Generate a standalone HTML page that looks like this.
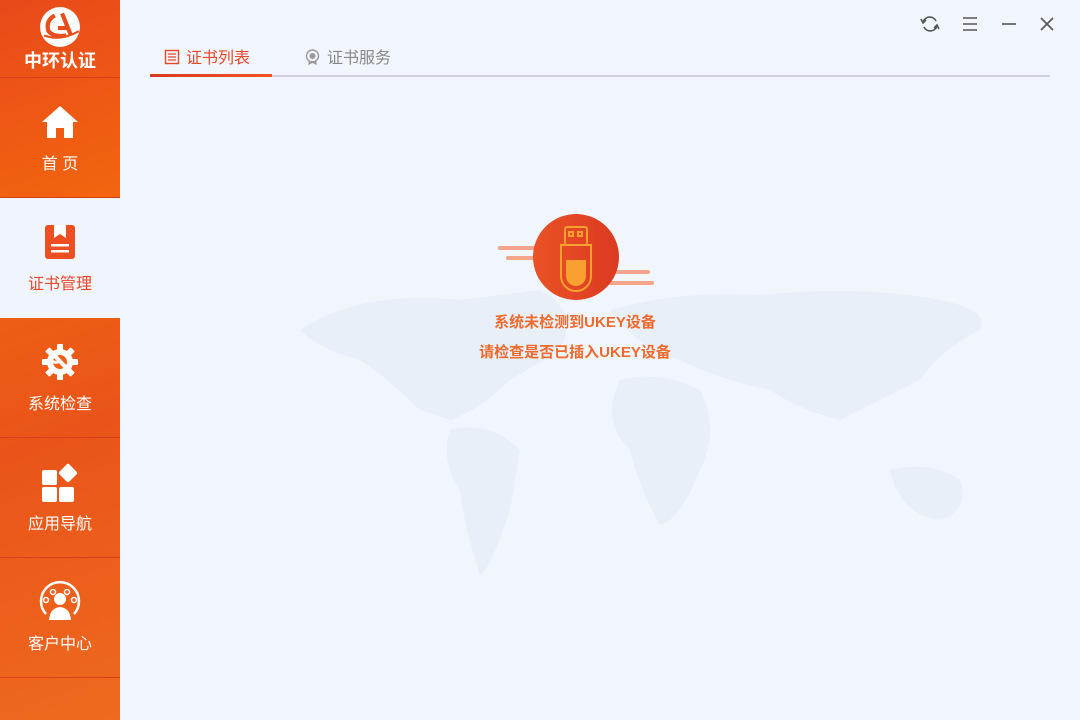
<!DOCTYPE html>
<html><head><meta charset="utf-8"><style>
*{margin:0;padding:0;box-sizing:border-box}
html,body{width:1080px;height:720px;overflow:hidden}
body{background:#f1f5fc;font-family:"Liberation Sans","Noto Sans CJK SC",sans-serif;position:relative}
.side{position:absolute;left:0;top:0;width:120px;height:720px;background:linear-gradient(160deg,#e9491b 0%,#f2640f 30%,#ea541a 60%,#ee6a1e 100%);overflow:hidden}
.item{position:absolute;left:0;width:120px;height:120px;color:#fff;font-size:16px;text-align:center;border-bottom:1px solid #d9401a}
.item svg{position:absolute;left:40px;top:24px}
.item span{position:absolute;left:0;right:0;top:72px}
.sel{background:#f0f4fb;color:#e8482a;border:none}
.logo{position:absolute;top:0;height:78px;width:120px;border-bottom:1px solid #d9401a;color:#fff;text-align:center}
.tabs{position:absolute;left:150px;top:38px;width:900px;height:39px;border-bottom:2px solid #cfd3d9}
.tab{position:absolute;top:6px;font-size:16px}
.ul{position:absolute;left:0;bottom:-2px;width:122px;height:3px;background:linear-gradient(90deg,#d83a22,#f4511e)}
.msg{position:absolute;left:375px;width:400px;text-align:center;font-size:15px;font-weight:bold;color:#ef6a2c}
</style></head><body>
<svg style="position:absolute;left:280px;top:270px" width="720" height="310" viewBox="0 0 720 310">
<g fill="#e6eef7" opacity="0.8">
<path d="M20 60 Q80 20 180 30 L260 20 Q300 40 280 80 L230 110 Q200 140 170 150 L140 140 Q110 110 80 90 Q40 80 20 60Z"/>
<path d="M170 160 Q210 150 240 180 L230 240 Q210 300 200 305 Q185 260 180 220 Q160 190 170 160Z"/>
<path d="M330 40 Q400 20 480 25 Q580 15 660 30 Q710 40 700 60 Q660 80 640 110 Q600 130 560 150 Q520 140 490 120 Q440 110 400 90 Q360 80 330 40Z"/>
<path d="M340 110 Q380 100 420 120 Q440 160 420 200 Q400 250 380 255 Q360 220 350 180 Q320 150 340 110Z"/>
<path d="M610 200 Q650 190 680 210 Q690 240 660 250 Q620 245 610 200Z"/>
</g></svg>
<div class="side">
<div class="logo">
<svg style="position:absolute;left:39px;top:6px" width="42" height="42" viewBox="0 0 40 40"><circle cx="20" cy="20" r="19" fill="#fff"/><path d="M15 9 Q6 14 9 24 Q14 30 26 28" stroke="#ea4d1c" stroke-width="4" fill="none"/><path d="M22 7 L30 27 M18 21 L28 21" stroke="#ea4d1c" stroke-width="4" fill="none"/><path d="M5 28 Q20 34 38 24" stroke="#ea4d1c" stroke-width="2" fill="none"/></svg>
<div style="position:absolute;top:47px;width:120px;font-size:18px;font-weight:bold">中环认证</div></div>
<div class="item" style="top:78px"><svg width="40" height="40" viewBox="0 0 40 40"><path d="M20 4 L38 20 L33 20 L33 36 L24 36 L24 26 L16 26 L16 36 L7 36 L7 20 L2 20Z" fill="#fff"/></svg><span>首 页</span></div>
<div class="item sel" style="top:198px"><svg width="40" height="40" viewBox="0 0 40 40"><rect x="5" y="3" width="30" height="34" rx="3" fill="#ee4f22"/><path d="M14 3 L14 16 L20 12 L26 16 L26 3" fill="#fff"/><rect x="11" y="22" width="18" height="2.5" fill="#fff"/><rect x="11" y="28" width="18" height="2.5" fill="#fff"/></svg><span>证书管理</span></div>
<div class="item" style="top:318px"><svg width="40" height="40" viewBox="0 0 40 40"><g fill="#fff"><circle cx="20" cy="20" r="13"/><g id="t"><rect x="17" y="2" width="6" height="7" rx="1"/></g><use href="#t" transform="rotate(45 20 20)"/><use href="#t" transform="rotate(90 20 20)"/><use href="#t" transform="rotate(135 20 20)"/><use href="#t" transform="rotate(180 20 20)"/><use href="#t" transform="rotate(225 20 20)"/><use href="#t" transform="rotate(270 20 20)"/><use href="#t" transform="rotate(315 20 20)"/></g><circle cx="20" cy="20" r="7" fill="#f06018"/><path d="M14 13 L30 30" stroke="#fff" stroke-width="4"/><path d="M10 14 A6 6 0 0 0 18 20" stroke="#fff" stroke-width="3" fill="none"/></svg><span>系统检查</span></div>
<div class="item" style="top:438px"><svg width="40" height="40" viewBox="0 0 40 40"><rect x="2" y="8" width="15" height="15" rx="2" fill="#fff"/><rect x="2" y="25" width="15" height="15" rx="2" fill="#fff"/><rect x="19" y="25" width="15" height="15" rx="2" fill="#fff"/><rect x="21" y="4" width="14" height="14" rx="2" fill="#fff" transform="rotate(45 28 11)"/></svg><span>应用导航</span></div>
<div class="item" style="top:558px"><svg width="44" height="44" viewBox="0 0 44 44" style="left:38px;top:22px"><path d="M8 34 A19 19 0 1 1 36 34" fill="none" stroke="#fff" stroke-width="2.5"/><circle cx="22" cy="19" r="6" fill="#fff"/><path d="M11 40 Q12 28 22 27 Q32 28 33 40Z" fill="#fff"/><circle cx="15" cy="12" r="2.5" fill="none" stroke="#fff" stroke-width="1.5"/><circle cx="29" cy="12" r="2.5" fill="none" stroke="#fff" stroke-width="1.5"/><circle cx="8" cy="20" r="2.5" fill="none" stroke="#fff" stroke-width="1.5"/><circle cx="36" cy="20" r="2.5" fill="none" stroke="#fff" stroke-width="1.5"/></svg><span>客户中心</span></div>
</div>
<svg style="position:absolute;left:918px;top:14px" width="150" height="20" viewBox="0 0 150 20">
<g stroke="#555" stroke-width="1.6" fill="none"><path d="M5 8 A7 7 0 0 1 18 7"/><path d="M19 12 A7 7 0 0 1 6 13"/><path d="M3 5 L5 9 L8 6"/><path d="M21 15 L19 11 L16 14"/>
<path d="M45 4 H59 M45 10 H59 M45 16 H59"/><path d="M84 10 H98"/><path d="M123 4 L135 16 M135 4 L123 16"/></g></svg>
<div class="tabs">
<div class="tab" style="left:14px;color:#e8482a"><svg width="16" height="16" viewBox="0 0 16 16" style="vertical-align:-2px;margin-right:6px"><rect x="1.5" y="1.5" width="13" height="13" fill="none" stroke="#e8482a" stroke-width="1.4"/><path d="M4 5H12M4 8H12M4 11H12" stroke="#e8482a" stroke-width="1.2"/></svg>证书列表</div>
<div class="tab" style="left:154px;color:#888"><svg width="17" height="17" viewBox="0 0 17 17" style="vertical-align:-3px;margin-right:6px"><circle cx="8.5" cy="7" r="6" fill="none" stroke="#999" stroke-width="1.4"/><circle cx="8.5" cy="7" r="3" fill="#999"/><path d="M5 12 L4 16 L8.5 14 L13 16 L12 12" fill="#999"/></svg>证书服务</div>
<div class="ul"></div></div>
<svg style="position:absolute;left:496px;top:214px" width="160" height="90" viewBox="0 0 160 90">
<defs><linearGradient id="g" x1="0" x2="1"><stop offset="0" stop-color="#ea5225"/><stop offset="1" stop-color="#db3a22"/></linearGradient></defs>
<g stroke="#f4a48a" stroke-width="4" stroke-linecap="round"><path d="M4 34 H46"/><path d="M12 44 H48"/><path d="M120 58 H152"/><path d="M114 69 H156"/></g>
<circle cx="80" cy="43" r="43" fill="url(#g)"/>
<g fill="none" stroke="#f9a030" stroke-width="2"><rect x="69" y="13" width="22" height="18" rx="2"/><rect x="73" y="18" width="4" height="4"/><rect x="82" y="18" width="4" height="4"/><path d="M65 31 H95 V62 A15 15 0 0 1 65 62Z"/></g>
<path d="M70 46 H90 V62 A10 10 0 0 1 70 62Z" fill="#f9a030"/>
</svg>
<div class="msg" style="top:311px">系统未检测到UKEY设备</div>
<div class="msg" style="top:341px">请检查是否已插入UKEY设备</div>
</body></html>
